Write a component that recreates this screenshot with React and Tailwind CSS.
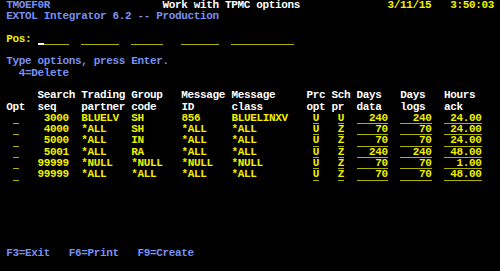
import React from "react";

const BLUE = "text-[#7890f0]";
const WHITE = "text-white";
const YEL = "text-[#f0f000]";

function Row({ segs = [] }) {
  const sorted = [...segs].sort((a, b) => a.c - b.c);
  const out = [];
  let cur = 0;
  sorted.forEach((s, i) => {
    if (s.c > cur) out.push(<span key={"g" + i}>{" ".repeat(s.c - cur)}</span>);
    if (s.field) {
      out.push(
        <span
          key={i}
          className="inline-block align-top h-[11.29px] border-b border-[#b0b000] text-[#f0f000]"
        >
          {s.cursor ? (
            <>
              <span className="inline-block align-top h-[11.29px] border-b-2 border-white"> </span>
              {s.t.slice(1)}
            </>
          ) : (
            s.t
          )}
        </span>
      );
    } else {
      out.push(
        <span key={i} className={s.cls}>
          {s.t}
        </span>
      );
    }
    cur = s.c + s.t.length;
  });
  return <div className="h-[11.29px] leading-[11.29px]">{out}</div>;
}

const t = (c, text, cls) => ({ c, t: text, cls });
const f = (c, text, extra = {}) => ({ c, t: text, field: true, ...extra });

const data = [
  ["3000", "BLUELV", "SH", "856", "BLUELINXV", "U", "U", "240", "240", "24.00"],
  ["4000", "*ALL", "SH", "*ALL", "*ALL", "U", "Z", "70", "70", "24.00"],
  ["5000", "*ALL", "IN", "*ALL", "*ALL", "U", "Z", "70", "70", "24.00"],
  ["5001", "*ALL", "RA", "*ALL", "*ALL", "U", "Z", "240", "240", "48.00"],
  ["99999", "*NULL", "*NULL", "*NULL", "*NULL", "U", "Z", "70", "70", "1.00"],
  ["99999", "*ALL", "*ALL", "*ALL", "*ALL", "U", "Z", "70", "70", "48.00"],
];

export default function App() {
  const rows = [];
  rows.push([
    t(1, "TMOEF0R", BLUE),
    t(26, "Work with TPMC options", WHITE),
    t(62, "3/11/15", YEL),
    t(72, "3:50:03", YEL),
  ]);
  rows.push([t(1, "EXTOL Integrator 6.2 -- Production", BLUE)]);
  rows.push([]);
  rows.push([
    t(1, "Pos:", YEL),
    f(6, "     ", { cursor: true }),
    f(13, "      "),
    f(21, "     "),
    f(29, "      "),
    f(37, "          "),
  ]);
  rows.push([]);
  rows.push([t(1, "Type options, press Enter.", BLUE)]);
  rows.push([t(3, "4=Delete", BLUE)]);
  rows.push([]);
  rows.push([
    t(6, "Search", WHITE),
    t(13, "Trading", WHITE),
    t(21, "Group", WHITE),
    t(29, "Message", WHITE),
    t(37, "Message", WHITE),
    t(49, "Prc", WHITE),
    t(53, "Sch", WHITE),
    t(57, "Days", WHITE),
    t(64, "Days", WHITE),
    t(71, "Hours", WHITE),
  ]);
  rows.push([
    t(1, "Opt", WHITE),
    t(6, "seq", WHITE),
    t(13, "partner", WHITE),
    t(21, "code", WHITE),
    t(29, "ID", WHITE),
    t(37, "class", WHITE),
    t(49, "opt", WHITE),
    t(53, "pr", WHITE),
    t(57, "data", WHITE),
    t(64, "logs", WHITE),
    t(71, "ack", WHITE),
  ]);
  data.forEach((d) => {
    rows.push([
      f(2, " "),
      t(11 - d[0].length, d[0], YEL),
      t(13, d[1], YEL),
      t(21, d[2], YEL),
      t(29, d[3], YEL),
      t(37, d[4], YEL),
      f(50, d[5]),
      f(54, d[6]),
      f(57, d[7].padStart(5, " ")),
      f(64, d[8].padStart(5, " ")),
      f(71, d[9].padStart(6, " ")),
    ]);
  });
  while (rows.length < 22) rows.push([]);
  rows.push([
    t(1, "F3=Exit", BLUE),
    t(11, "F6=Print", BLUE),
    t(22, "F9=Create", BLUE),
  ]);
  rows.push([]);

  return (
    <div className="w-[500px] h-[271px] bg-black overflow-hidden whitespace-pre font-['Liberation_Mono',monospace] font-bold text-[11px] tracking-[-0.35px]">
      {rows.map((segs, i) => (
        <Row key={i} segs={segs} />
      ))}
    </div>
  );
}
